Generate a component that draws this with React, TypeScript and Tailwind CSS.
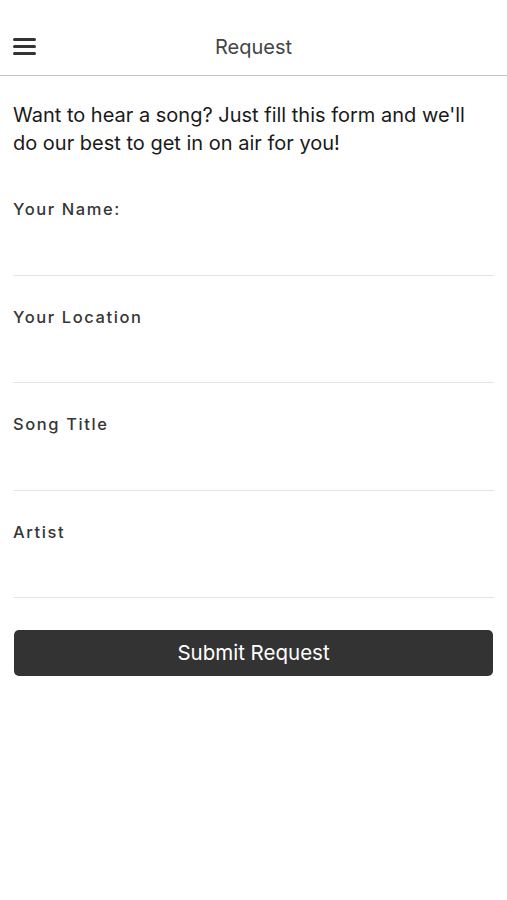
import React from "react";

const fields = ["Your Name:", "Your Location", "Song Title", "Artist"];

export default function App() {
  return (
    <div className="min-h-[900px] bg-white font-['Inter','Open_Sans',sans-serif] text-[#222]">
      <header className="relative flex h-[76px] items-center justify-center border-b border-[#c4c4c4] pt-[18px]">
        <button className="absolute left-[13px] top-[38px] flex w-[23px] flex-col gap-[4.5px]">
          <span className="h-[2.5px] w-full rounded-sm bg-[#333]" />
          <span className="h-[2.5px] w-full rounded-sm bg-[#333]" />
          <span className="h-[2.5px] w-full rounded-sm bg-[#333]" />
        </button>
        <h1 className="text-[20px] text-[#444]">Request</h1>
      </header>

      <main className="px-[13px]">
        <p className="mt-[25px] max-w-[470px] text-[20px] leading-[28px] text-[#1a1a1a]">
          Want to hear a song? Just fill this form and we'll do our best to get in on air for you!
        </p>

        <form className="mt-[11px] flex flex-col">
          {fields.map((f) => (
            <label key={f} className="flex h-[107.5px] flex-col border-b border-[#e4e4e4]">
              <span className="pt-[30px] text-[16.5px] leading-[22px] font-medium tracking-[1.6px] text-[#363636]">{f}</span>
              <input className="mt-auto mb-[10px] bg-transparent outline-none" />
            </label>
          ))}
          <button
            type="button"
            className="mx-[1px] mt-[32px] h-[46px] rounded-[5px] bg-[#333] text-[20.5px] text-white"
          >
            Submit Request
          </button>
        </form>
      </main>
    </div>
  );
}
